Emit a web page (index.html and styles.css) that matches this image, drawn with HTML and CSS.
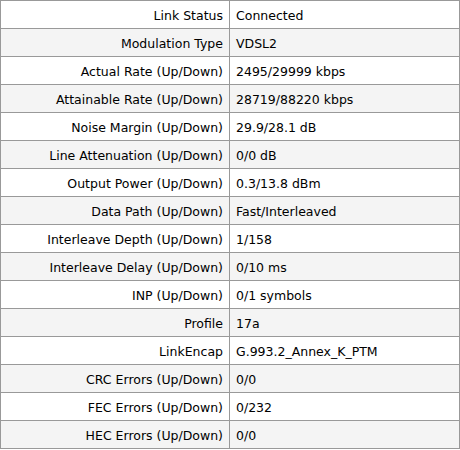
FILE: index.html
```html
<!DOCTYPE html>
<html>
<head>
<meta charset="utf-8">
<link rel="stylesheet" href="styles.css">
</head>
<body>
<table class="status">
<colgroup><col class="c-label"><col class="c-value"></colgroup>
<tbody>
<tr><td class="label">Link Status</td><td>Connected</td></tr>
<tr><td class="label">Modulation Type</td><td>VDSL2</td></tr>
<tr><td class="label">Actual Rate (Up/Down)</td><td>2495/29999 kbps</td></tr>
<tr><td class="label">Attainable Rate (Up/Down)</td><td>28719/88220 kbps</td></tr>
<tr><td class="label">Noise Margin (Up/Down)</td><td>29.9/28.1 dB</td></tr>
<tr><td class="label">Line Attenuation (Up/Down)</td><td>0/0 dB</td></tr>
<tr><td class="label">Output Power (Up/Down)</td><td>0.3/13.8 dBm</td></tr>
<tr><td class="label">Data Path (Up/Down)</td><td>Fast/Interleaved</td></tr>
<tr><td class="label">Interleave Depth (Up/Down)</td><td>1/158</td></tr>
<tr><td class="label">Interleave Delay (Up/Down)</td><td>0/10 ms</td></tr>
<tr><td class="label">INP (Up/Down)</td><td>0/1 symbols</td></tr>
<tr><td class="label">Profile</td><td>17a</td></tr>
<tr><td class="label">LinkEncap</td><td>G.993.2_Annex_K_PTM</td></tr>
<tr><td class="label">CRC Errors (Up/Down)</td><td>0/0</td></tr>
<tr><td class="label">FEC Errors (Up/Down)</td><td>0/232</td></tr>
<tr><td class="label">HEC Errors (Up/Down)</td><td>0/0</td></tr>
</tbody>
</table>
</body>
</html>
```
FILE: styles.css
```css
html, body {
  margin: 0;
  padding: 0;
  background: #fff;
}
.status {
  border-collapse: separate;
  border-spacing: 0;
  table-layout: fixed;
  box-sizing: border-box;
  width: 460px;
  border-top: 1px solid #999;
  border-left: 1px solid #999;
  font-family: "DejaVu Sans", Verdana, sans-serif;
  font-size: 12.5px;
  color: #000;
}
.c-label { width: 229px; }
.c-value { width: 230px; }
.status td {
  border-right: 1px solid #999;
  border-bottom: 1px solid #999;
  height: 28px;
  padding: 1px 6px 0 6px;
  box-sizing: border-box;
  white-space: nowrap;
}
.status tr:nth-child(even) td {
  background: #f4f4f4;
}
.status td.label {
  text-align: right;
}
```
